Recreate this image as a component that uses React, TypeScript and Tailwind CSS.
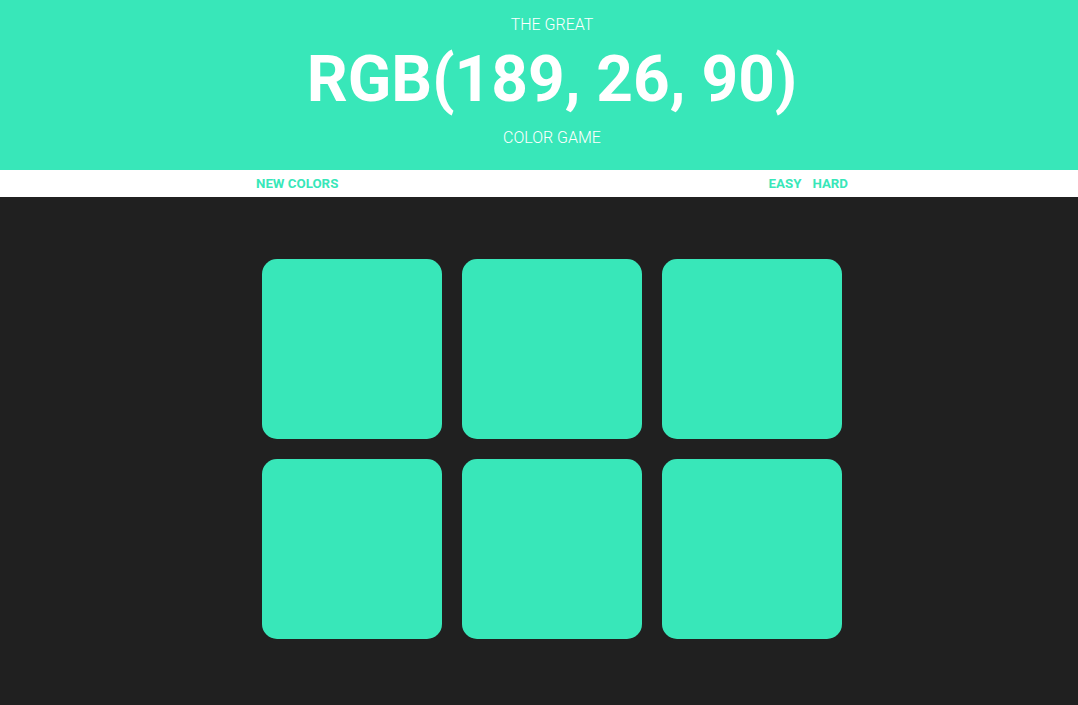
export default function App() {
  const squares = [0, 1, 2, 3, 4, 5];

  return (
    <div className="min-h-[705px] bg-[#202020] font-['Roboto',sans-serif]">
      <header className="bg-[#38e7b9] pl-[26px] text-center text-white h-[170px] flex flex-col items-center">
        <p className="mt-[16px] text-[16px] leading-[18px] uppercase font-light">The Great</p>
        <h1 className="mt-[6px] text-[64px] leading-[80px] font-bold">RGB(189, 26, 90)</h1>
        <p className="mt-[9px] text-[16px] leading-[18px] uppercase font-light">Color Game</p>
      </header>

      <nav className="bg-white h-[27px] pl-[26px] flex justify-center">
        <div className="w-[600px] flex items-center justify-between px-[4px] text-[13.3px] font-bold uppercase text-[#38e7b9]">
          <button className="uppercase">New Colors</button>
          <div className="flex gap-[11px]">
            <button className="uppercase">Easy</button>
            <button className="uppercase">Hard</button>
          </div>
        </div>
      </nav>

      <main className="pl-[26px] flex justify-center">
        <div className="w-[600px] mt-[52px] flex flex-wrap">
          {squares.map((i) => (
            <div key={i} className="w-[180px] h-[180px] m-[10px] rounded-[15px] bg-[#38e7b9]" />
          ))}
        </div>
      </main>
    </div>
  );
}
